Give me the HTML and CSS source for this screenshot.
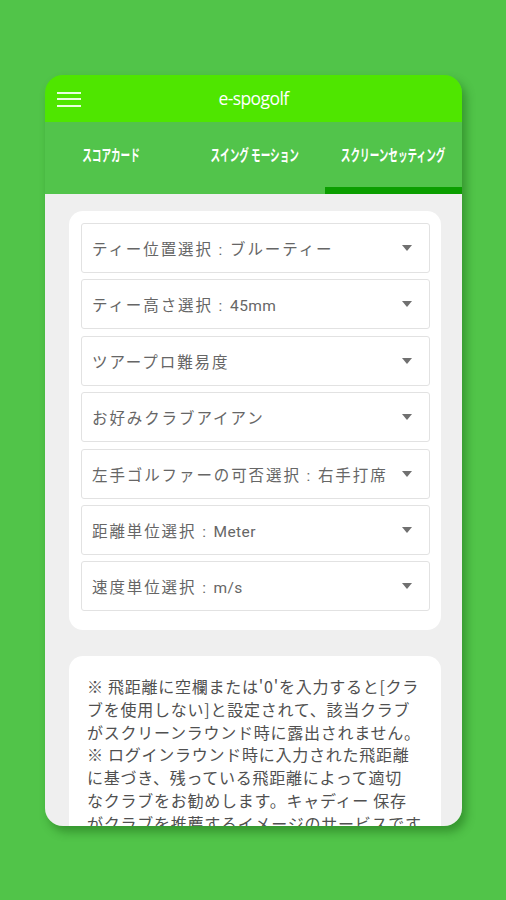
FILE: index.html
```html
<!DOCTYPE html>
<html lang="ja">
<head>
<meta charset="utf-8">
<title>e-spogolf</title>
<link rel="stylesheet" href="styles.css">
</head>
<body>
<div class="frame">
  <header class="header">
    <span class="menu" aria-label="menu"><i></i><i></i><i></i></span>
    <span class="title">e-spogolf</span>
  </header>
  <nav class="tabs">
    <div class="tab"><span>スコアカード</span></div>
    <div class="tab mid"><span>スイング モーション</span></div>
    <div class="tab active"><span>スクリーンセッティング</span></div>
  </nav>
  <main class="content">
    <section class="card selects">
      <div class="select"><span>ティー位置選択 : ブルーティー</span><b class="caret"></b></div>
      <div class="select"><span>ティー高さ選択 : <em class="lat">45mm</em></span><b class="caret"></b></div>
      <div class="select"><span>ツアープロ難易度</span><b class="caret"></b></div>
      <div class="select"><span>お好みクラブアイアン</span><b class="caret"></b></div>
      <div class="select"><span>左手ゴルファーの可否選択 : 右手打席</span><b class="caret"></b></div>
      <div class="select"><span>距離単位選択 : <em class="lat">Meter</em></span><b class="caret"></b></div>
      <div class="select"><span>速度単位選択 : <em class="lat">m/s</em></span><b class="caret"></b></div>
    </section>
    <section class="card note">
      <p>※ 飛距離に空欄または'0'を入力すると[クラ<br>ブを使用しない]と設定されて、該当クラブ<br>がスクリーンラウンド時に露出されません。<br>※ ログインラウンド時に入力された飛距離<br>に基づき、残っている飛距離によって適切<br>なクラブをお勧めします。キャディー 保存<br>がクラブを推薦するイメージのサービスです。</p>
    </section>
  </main>
</div>
</body>
</html>
```

FILE: styles.css
```css
* { box-sizing: border-box; }
html, body { margin: 0; padding: 0; }
body {
  background: #51c449;
  width: 506px;
  height: 900px;
  overflow: hidden;
  font-family: "Noto Sans CJK JP", "Noto Sans", sans-serif;
}
.frame {
  margin: 75px 0 0 45px;
  width: 417px;
  height: 751px;
  border-radius: 18px;
  overflow: hidden;
  display: flex;
  flex-direction: column;
  box-shadow: 4px 6px 10px rgba(20, 90, 15, 0.45);
}
.header {
  position: relative;
  height: 47px;
  flex: none;
  background: #4fe600;
  display: flex;
  align-items: center;
  justify-content: center;
}
.menu {
  position: absolute;
  left: 12px;
  top: 17px;
  width: 24px;
  display: flex;
  flex-direction: column;
  gap: 4.4px;
}
.menu i {
  display: block;
  height: 2px;
  background: #e9ffe0;
}
.title {
  color: #ffffff;
  font-family: "Open Sans", "Liberation Sans", sans-serif;
  font-size: 17.5px;
  letter-spacing: -0.6px;
  margin-top: -2px;
}
.tabs {
  height: 72px;
  flex: none;
  background: #52c44b;
  display: grid;
  grid-template-columns: 133px 147px minmax(0, 1fr);
}
.tab {
  min-width: 0;
  display: flex;
  align-items: center;
  justify-content: center;
  padding-bottom: 2px;
  border-bottom: 7px solid transparent;
  color: #ffffff;
}
.tab.mid { padding-left: 7px; }
.tab.active { border-bottom-color: #0b9e00; }
.tab span {
  flex: none;
  display: inline-block;
  font-size: 16px;
  font-weight: bold;
  white-space: nowrap;
  transform: scaleX(0.6);
}
.content {
  flex: 1;
  background: #efefef;
  padding: 17px 21px 0 24px;
  overflow: hidden;
}
.card {
  background: #ffffff;
  border-radius: 14px;
}
.selects {
  padding: 12px 11px 19px 12px;
  display: flex;
  flex-direction: column;
  gap: 6.4px;
}
.select {
  height: 50px;
  border: 1px solid #e2e2e2;
  border-radius: 3px;
  display: flex;
  align-items: center;
  justify-content: space-between;
  padding: 0 17px 0 10px;
  color: #666666;
  font-family: "Roboto", "Noto Sans CJK JP", sans-serif;
  font-size: 15.5px;
  letter-spacing: 1.9px;
  white-space: nowrap;
}
.lat {
  font-style: normal;
  letter-spacing: 0.4px;
}
.caret {
  flex: none;
  width: 0;
  height: 0;
  border-left: 5.5px solid transparent;
  border-right: 5.5px solid transparent;
  border-top: 6px solid #707070;
}
.note {
  margin-top: 26px;
  padding: 19px 10px 20px 18px;
}
.note p {
  margin: 0;
  color: #505050;
  font-size: 16px;
  line-height: 22.7px;
  letter-spacing: 0.75px;
  white-space: nowrap;
}
```
